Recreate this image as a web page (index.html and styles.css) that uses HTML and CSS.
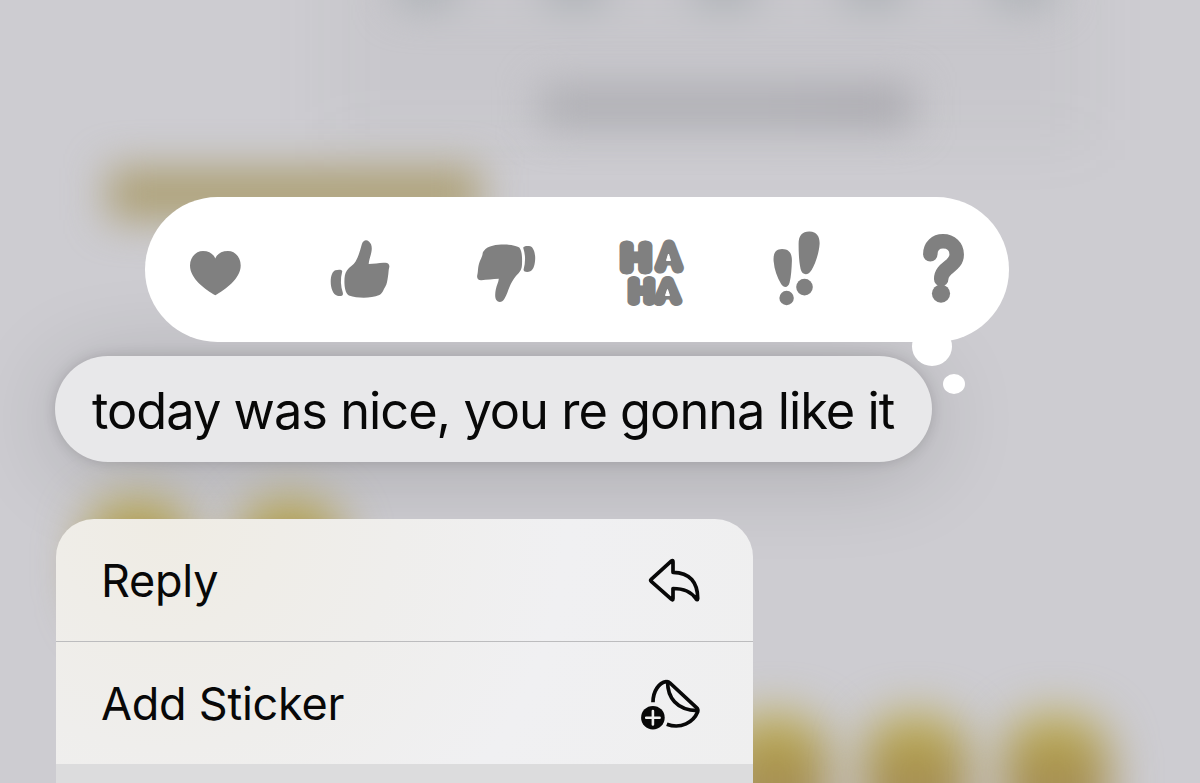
FILE: index.html
```html
<!DOCTYPE html>
<html lang="en">
<head>
    <meta charset="UTF-8">
    <meta name="viewport" content="width=device-width, initial-scale=1.0">
    <title>Messages</title>
    <link rel="stylesheet" href="styles.css">
</head>
<body>

    <!-- Blurred conversation -->
    <div class="backdrop">
        <span class="blob haze"></span>
        <span class="blob emoji-row"></span>
        <span class="blob caption"></span>
        <span class="blob keys"></span>
        <span class="blob face face-1"></span>
        <span class="blob face face-2"></span>
        <span class="blob face face-3"></span>
        <span class="blob face face-4"></span>
        <span class="blob face face-5"></span>
    </div>

    <main class="overlay">
        <!-- Reactions -->
        <div class="reactions">
            <svg class="reaction" viewBox="175 220 80 100">
                <path d="M215.3 295.3C206 290 190 279 190 265.500C190 257 196 251 203 251C209 251 213.500 254 215.300 258.500C217 254 221.500 251 228 251C235 251 240.700 257 240.700 265.500C240.700 279 224.500 290 215.300 295.300Z"/>
            </svg>
            <svg class="reaction" viewBox="320.600 220 80 100">
                <path d="M361.500 244C363 240 366 239.500 368.500 241.500C371.500 244 371.800 248 371 252C370.300 256 368.500 260 368.300 264C374 264 380 262.300 385 262.800C388 263 389.500 265 388.800 267.500C388 270 388.300 273 387.500 277C387 280 386.500 284 385 286.500C383 289.500 382.500 293 379 295C370 298.500 358 298.500 348.500 295.500C345 293.500 344 287 344 281.500C344 277 344.500 273 346.500 270.500C349 267 353 265 355.200 261.500C358.500 256 360 249 361.500 244Z"/>
                <path d="M335 270.300C338 269.300 342.300 269.500 341.800 271.500C339.800 279 340.200 286 342.500 293C343.200 296 340 296.500 337 295.800C332.500 294.500 330.300 288 330.300 281.500C330.300 276 332 271.500 335 270.300Z"/>
            </svg>
            <svg class="reaction" viewBox="466.200 220 80 100">
                <path d="M484 251C488 245.500 497 244.600 504 244.600C510 244.600 516 245.500 519.500 247.500C522 250.500 522.300 256 522.300 261C522.200 266 522.300 269 519 273C515 277 513 280 511 284C508.500 289 507.500 294 504.500 299C502.500 302.500 498.500 302.800 496.500 300C495 297.500 495.200 293.500 496 289.500C496.800 285.500 498.800 282 499 278.800C493 278.800 487 280 481.500 280.200C478 280.300 476.800 278 477.500 275C478.200 272.500 478 270 478.500 267C479.500 261 482 258 482.700 254.500C482.900 253 483 252 484 251Z"/>
                <path d="M523.400 247.700C523.800 245.800 528 245.600 530.500 246.300C534 247.500 535.500 254 535.400 258.500C535.200 264 534 269.500 530.500 271.300C528 272.300 523.500 272.200 523.800 269.500C525.800 262 525.800 255 523.400 247.700Z"/>
            </svg>
            <svg class="reaction haha" viewBox="611.800 220 80 100">
                <text class="ha-top"><tspan x="621.800" y="269" textLength="28" lengthAdjust="spacingAndGlyphs">H</tspan><tspan x="658.500" y="268" textLength="20.500" lengthAdjust="spacingAndGlyphs">A</tspan></text>
                <text class="ha-bottom"><tspan x="629.500" y="300.500" textLength="23.500" lengthAdjust="spacingAndGlyphs">H</tspan><tspan x="657.500" y="301.300" textLength="20" lengthAdjust="spacingAndGlyphs">A</tspan></text>
                <path class="counter" d="M668.300 254L670.300 260.500H666.300ZM667.300 289.500L669.300 295.500H665.300Z"/>
            </svg>
            <svg class="reaction" viewBox="757.400 220 80 100">
                <path d="M774 261C773.500 253 776 249.200 782.500 249C790 249 792.500 254 792.300 261C792 269 791.500 277 790 282.500C788.700 287.700 784.500 288.600 781.500 284C777.500 277 774.800 270 774 261Z"/>
                <circle cx="787" cy="298" r="7.200"/>
                <path d="M799 244C799 235 803 231.300 810 231.500C817.500 231.700 820.300 237 820 244C819.300 254 815.500 264 812 270C808.500 276 802.500 275.500 801 269C799.500 262 799 254 799 244Z"/>
                <circle cx="804.900" cy="287.100" r="8.300"/>
            </svg>
            <svg class="reaction" viewBox="903 220 80 100">
                <path class="hook" d="M930.300 254.300C930.300 246 936 241.300 943 241.300C951 241.300 956.700 246.500 956.700 254.500C956.700 267 941.200 267 941.200 279"/>
                <circle cx="941" cy="293.600" r="9.100"/>
            </svg>
            <span class="tail tail-large"></span>
            <span class="tail tail-small"></span>
        </div>

        <!-- Selected message -->
        <div class="message"><span>today was nice, you re gonna like it</span></div>

        <!-- Context menu -->
        <div class="menu">
            <div class="menu-item">
                <span>Reply</span>
                <svg class="menu-icon" viewBox="639 550 64 60">
                    <path d="M651.200 579.400L671.500 560.900Q673 559.800 673 561.800V572.300C690 572.300 697.800 583 697.700 598.500Q697.500 600.800 696 598.800C691 591.500 684 588.500 673 588.500V598.500Q673 600.700 671.300 599.200L651.200 581.300Q650 580.300 651.200 579.400Z"/>
                </svg>
            </div>
            <div class="menu-item">
                <span>Add Sticker</span>
                <svg class="menu-icon" viewBox="639 673 64 60">
                    <path d="M653 702.300C653 691 659 682.700 666.200 681.700Q668.200 681.300 670 683L696.500 707.700Q698.500 709.500 697.600 712C693.500 722 681 729.500 666.800 724.200"/>
                    <path d="M667.600 682C667.600 697 676 710 697.500 710.700"/>
                    <circle class="badge" cx="652.900" cy="717.700" r="11.800"/>
                    <path class="plus" d="M646.200 717.700H659.600M652.900 711V724.400"/>
                </svg>
            </div>
            <div class="menu-gap"></div>
        </div>
    </main>

</body>
</html>
```
FILE: styles.css
```css
:root {
    --background: #cdccd1;
    --bubble: #e8e8ea;
    --glyph: #808080;
    --text: #080808;
}

* {
    margin: 0;
    padding: 0;
    box-sizing: border-box;
}

body {
    position: relative;
    width: 1200px;
    height: 783px;
    overflow: hidden;
    font-family: Inter, "Liberation Sans", sans-serif;
    color: var(--text);
    background: var(--background);
}

/* Blurred conversation */
.backdrop {
    position: absolute;
    inset: 0;
    overflow: hidden;
}

.blob {
    position: absolute;
    filter: blur(20px);
}

.emoji-row {
    left: 108px;
    top: 168px;
    width: 372px;
    height: 52px;
    background: #ada075;
}

.caption {
    left: 540px;
    top: 86px;
    width: 372px;
    height: 40px;
    background: linear-gradient(90deg, #adadb2 60%, #a7a6ac);
}

.keys {
    left: 396px;
    top: -34px;
    width: 660px;
    height: 40px;
    background: repeating-linear-gradient(90deg, #abb0b4 0 60px, #c8c7cc 60px 149px);
}

.face {
    top: 714px;
    width: 108px;
    height: 130px;
    border-radius: 44px;
    background: linear-gradient(#c2b250, #a6904f 45%, #a58d60);
    filter: blur(23px);
}

.face-1 {
    left: 84px;
    top: 500px;
}

.face-2 {
    left: 236px;
    top: 500px;
}

.face-3 {
    left: 722px;
}

.face-4 {
    left: 862px;
}

.face-5 {
    left: 1002px;
}

.haze {
    left: 330px;
    top: -80px;
    width: 760px;
    height: 220px;
    background: rgba(110, 110, 120, 0.05);
    filter: blur(30px);
}

.overlay {
    position: relative;
    display: flex;
    flex-direction: column;
    align-items: flex-start;
    padding-top: 197px;
}

/* Reactions */
.reactions {
    position: relative;
    z-index: 1;
    display: flex;
    justify-content: space-between;
    align-items: center;
    width: 864px;
    height: 145px;
    margin-left: 145px;
    padding: 0 26px 0 30px;
    border-radius: 73px;
    background: #fff;
}

.reaction {
    width: 80px;
    height: 100px;
    fill: var(--glyph);
}

.haha text {
    font-family: Inter, sans-serif;
    font-weight: 100;
    stroke: var(--glyph);
    stroke-linejoin: round;
}

.ha-top {
    font-size: 31px;
    stroke-width: 11px;
}

.ha-bottom {
    font-size: 27px;
    stroke-width: 10px;
}

.counter {
    fill: #fff;
    stroke: #fff;
    stroke-linejoin: round;
}

.hook {
    fill: none;
    stroke: var(--glyph);
    stroke-width: 14.5;
    stroke-linecap: round;
}

.tail {
    position: absolute;
    border-radius: 50%;
    background: #fff;
}

.tail-large {
    left: 767px;
    top: 130px;
    width: 40px;
    height: 39px;
}

.tail-small {
    left: 798px;
    top: 177px;
    width: 22px;
    height: 20px;
}

/* Selected message */
.message {
    display: flex;
    align-items: center;
    width: 877px;
    height: 106px;
    margin: 14px 0 0 55px;
    padding: 2px 0 0 37px;
    border-radius: 53px;
    background: var(--bubble);
    box-shadow: 0 0 14px rgba(0, 0, 0, 0.15), 0 10px 90px rgba(0, 0, 0, 0.17);
    font-size: 50.5px;
    letter-spacing: -0.98px;
    white-space: nowrap;
}

/* Context menu */
.menu {
    position: relative;
    width: 697px;
    height: 264px;
    margin: 57px 0 0 56px;
    border-radius: 38px 38px 0 0;
    overflow: hidden;
    background: radial-gradient(circle at 110px 0, #efece4, #efeeec 230px, #f0f0f2 400px, #efefef);
}

.menu-item {
    display: flex;
    justify-content: space-between;
    align-items: center;
    height: 122px;
    padding: 0 50px 0 45px;
    font-size: 45px;
    letter-spacing: -0.25px;
}

.menu-item + .menu-item {
    height: 123px;
    border-top: 1px solid #bcbcbe;
}

.menu-icon {
    width: 64px;
    height: 60px;
    fill: none;
    stroke: var(--text);
    stroke-width: 3.7;
    stroke-linecap: butt;
    stroke-linejoin: round;
}

.menu-icon .badge {
    fill: var(--text);
    stroke: none;
}

.menu-icon .plus {
    stroke: #f0f0f0;
    stroke-width: 2.6;
    stroke-linecap: round;
}

.menu-gap {
    height: 19px;
    background: #dcdcdd;
}
```
